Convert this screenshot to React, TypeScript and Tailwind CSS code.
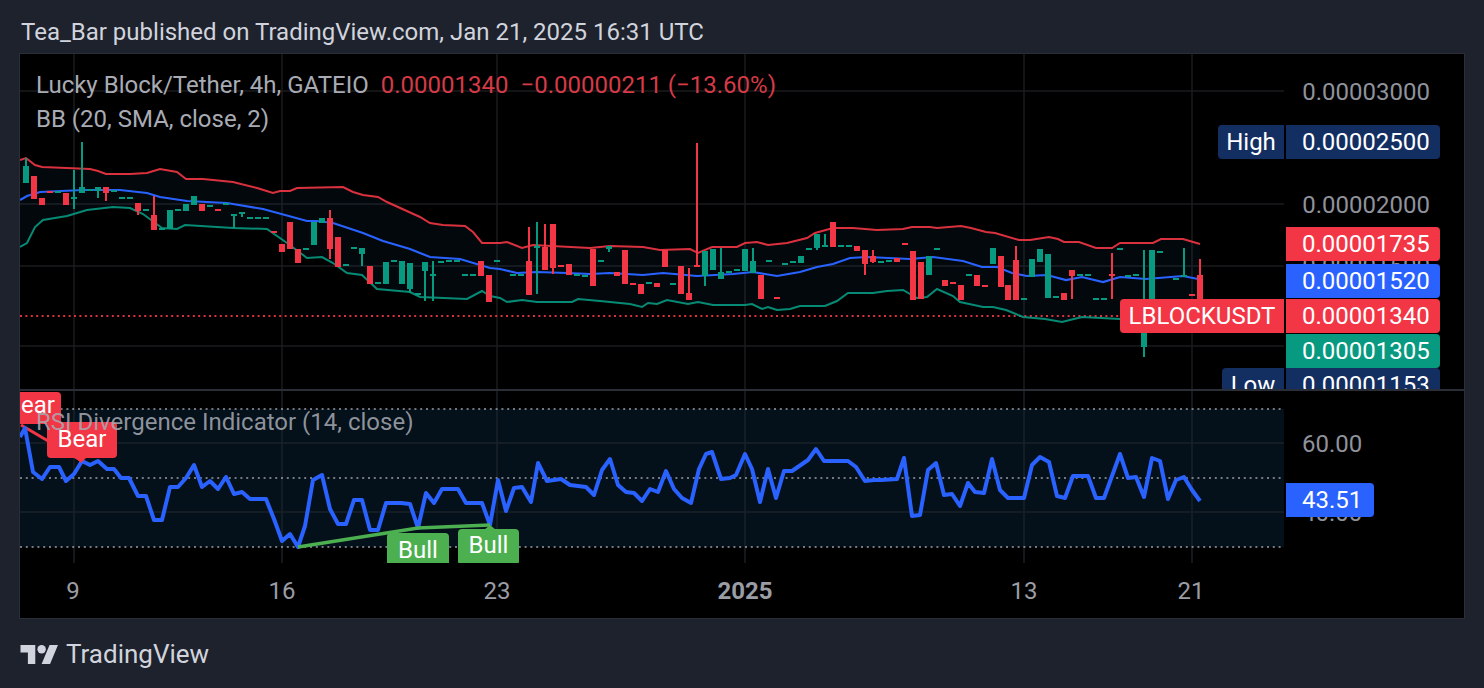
const RED = "#f23645";
const TEAL = "#089981";
const BLUE = "#2962ff";

const upper =
  "20,160 26,158 35,165 42,167 67,168 90,169 98,171 106,174 130,174 147,173 160,169 177,172 186,179 203,179 233,182 257,188 273,193 280,191 290,191 297,188 343,187 353,192 363,195 378,197 387,202 420,217 430,223 443,225 465,226 473,232 482,243 500,243 507,242 522,248 533,245 590,248 610,246 643,247 660,250 690,249 698,253 712,247 737,247 745,243 757,242 768,245 787,243 807,238 815,233 833,228 853,228 877,230 903,229 912,227 930,227 937,228 961,226 971,228 986,232 995,233 1019,240 1030,240 1049,237 1058,239 1064,242 1079,242 1096,248 1112,248 1120,243 1153,243 1161,239 1183,239 1200,244";
const middle =
  "20,200 27,196 40,192 83,190 120,190 147,193 160,197 187,201 227,203 263,209 307,221 317,221 333,223 363,233 383,241 410,249 430,257 460,259 490,268 500,269 517,273 537,272 567,273 590,274 610,273 643,275 663,273 697,276 733,274 753,272 777,276 800,272 817,267 833,264 850,258 867,257 910,259 933,257 963,261 982,267 997,267 1012,273 1027,276 1047,275 1066,280 1082,277 1103,282 1120,277 1146,279 1183,276 1198,279";
const lower =
  "20,247 27,243 35,227 43,220 67,216 87,210 113,207 130,208 143,214 162,228 177,229 185,225 233,228 267,229 287,243 307,258 322,257 333,263 347,273 362,275 377,289 410,292 420,297 467,299 482,291 490,296 500,298 507,302 522,300 537,302 572,302 578,299 600,301 630,304 642,307 648,303 657,304 667,300 688,304 698,302 713,305 745,305 752,304 762,309 768,307 777,310 790,309 800,306 825,306 837,301 848,293 873,293 887,291 903,290 917,298 927,297 937,289 953,296 960,302 983,307 993,307 1006,310 1023,317 1045,319 1062,322 1082,317 1120,319 1200,316";
const bandFill = `${upper} ${lower.split(" ").reverse().join(" ")}`;

const rsi =
  "20,436 25,427 33,471 42,478 50,466 59,466 66,480 74,473 82,460 90,464 98,460 107,468 114,468 121,477 129,477 138,495 146,495 154,519 162,519 170,486 178,486 186,477 194,464 202,486 210,480 218,488 226,476 234,493 242,491 250,498 266,498 274,518 282,540 290,533 298,546 305,525 313,479 322,474 330,508 338,523 346,523 354,499 362,499 370,529 378,529 386,502 401,502 410,503 418,527 426,492 434,502 442,488 458,488 466,502 482,502 490,524 498,479 506,510 514,487 522,486 531,501 538,462 547,480 561,478 570,484 586,486 594,494 602,469 610,458 618,484 626,491 634,492 642,500 650,488 658,491 666,470 674,488 682,497 691,502 699,468 706,453 712,451 721,478 730,477 736,474 745,453 752,468 760,501 768,468 776,497 784,470 792,470 808,459 816,448 824,460 848,460 856,466 865,480 874,479 881,479 897,478 904,457 912,515 920,514 928,469 936,462 944,494 952,493 960,505 968,482 975,491 984,492 992,458 1000,489 1008,497 1024,497 1032,464 1040,456 1049,461 1057,495 1065,497 1073,475 1088,475 1096,497 1104,497 1120,453 1128,477 1136,476 1144,496 1152,457 1160,460 1168,498 1176,479 1184,476 1192,489 1200,500";

// x, body top, body bottom, colour, wick top, wick bottom
type Candle = [number, number, number, "r" | "g", number?, number?];

const candles: Candle[] = [
  [26, 166, 183, "g", 158], [34, 176, 199, "r"], [42, 198, 205, "r"], [50, 191, 193, "r"], [58, 191, 193, "g"],
  [66, 193, 205, "r"], [74, 197, 199, "g", 170, 209], [82, 187, 193, "g", 142], [90, 189, 191, "g"],
  [98, 187, 191, "g", undefined, 198], [106, 187, 193, "r", undefined, 201], [114, 190, 192, "g"],
  [122, 197, 199, "g"], [130, 197, 199, "g"], [138, 203, 211, "r", undefined, 215], [146, 209, 211, "g"],
  [154, 215, 230, "r", 196], [162, 228, 230, "g"], [170, 210, 229, "g"], [178, 209, 211, "g"], [186, 204, 211, "g"],
  [194, 196, 205, "g"], [202, 204, 211, "r"], [210, 205, 207, "g"], [218, 209, 211, "r"], [226, 203, 205, "g"],
  [234, 214, 216, "g", undefined, 228], [242, 212, 214, "g", undefined, 217], [250, 217, 219, "g"],
  [258, 217, 219, "g"], [266, 217, 219, "g"], [274, 231, 233, "r"], [282, 244, 252, "r"], [290, 222, 249, "r"],
  [298, 249, 263, "r"], [306, 248, 250, "g"], [314, 222, 245, "g"], [322, 218, 223, "g"],
  [330, 218, 249, "r", 210, 259], [338, 237, 267, "r"], [346, 264, 266, "g"], [354, 247, 249, "g"],
  [362, 248, 254, "g", undefined, 266], [370, 266, 284, "r"], [378, 282, 284, "g"], [386, 262, 284, "g"],
  [394, 260, 262, "g"], [402, 261, 284, "g"], [410, 263, 289, "g", undefined, 293], [418, 293, 295, "g"],
  [425, 262, 271, "g", undefined, 301], [433, 274, 276, "g", 261, 301], [441, 261, 263, "g"], [449, 260, 262, "g"],
  [457, 260, 262, "g"], [465, 274, 276, "g"], [473, 274, 276, "g"], [481, 261, 276, "r"], [489, 275, 302, "r"],
  [497, 260, 262, "g"], [513, 274, 276, "g"], [521, 274, 276, "g"], [529, 261, 295, "r", 227],
  [537, 246, 248, "g", 222, 294], [545, 247, 270, "r", 224], [553, 224, 268, "r", undefined, 274],
  [561, 265, 267, "r"], [569, 264, 275, "r"], [577, 274, 276, "g"], [585, 275, 277, "g"], [593, 249, 286, "r"],
  [601, 260, 262, "g"], [609, 246, 249, "g", undefined, 252], [617, 272, 276, "r"], [625, 250, 284, "r"],
  [633, 283, 285, "r"], [641, 284, 294, "r"], [649, 282, 284, "g"], [657, 283, 287, "r"], [665, 250, 267, "r"],
  [673, 283, 285, "g"], [681, 266, 294, "r"], [689, 293, 300, "r", 268], [697, 265, 267, "r", 143],
  [705, 251, 276, "g", undefined, 286], [713, 249, 270, "g"], [721, 272, 279, "g", 248], [729, 271, 273, "g"],
  [737, 269, 271, "g"], [745, 249, 271, "g"], [753, 261, 273, "g", 248], [761, 275, 299, "r"], [769, 260, 262, "g"],
  [777, 297, 299, "r"], [785, 263, 265, "g"], [793, 261, 263, "g"], [801, 256, 263, "g"], [809, 248, 250, "g"],
  [817, 234, 248, "g", undefined, 250], [825, 245, 247, "g", 234], [833, 222, 247, "r"], [841, 245, 247, "g"],
  [849, 245, 247, "g"], [857, 246, 251, "r"], [865, 250, 264, "r", undefined, 275], [873, 256, 262, "r", 250, 263],
  [881, 261, 263, "g"], [889, 260, 262, "g"], [897, 258, 262, "r"], [905, 243, 245, "r"], [913, 251, 300, "r"],
  [921, 262, 299, "r"], [929, 256, 275, "g"], [937, 248, 250, "g"], [945, 280, 286, "r"], [953, 282, 284, "r"],
  [961, 285, 300, "r"], [969, 274, 276, "g"], [977, 275, 286, "r"], [985, 285, 287, "r"], [993, 248, 264, "g"],
  [1001, 256, 287, "r"], [1008, 285, 300, "r"], [1016, 260, 300, "r", 246], [1024, 298, 300, "g"],
  [1032, 259, 277, "g"], [1040, 249, 262, "g"], [1048, 254, 298, "g"], [1056, 296, 298, "g"], [1064, 293, 300, "r"],
  [1072, 270, 276, "r", undefined, 299], [1080, 274, 276, "g"], [1088, 274, 276, "g"], [1096, 298, 300, "g"],
  [1104, 298, 300, "g"], [1112, 274, 276, "r", 253, 299], [1120, 248, 250, "g"], [1128, 275, 277, "g"],
  [1136, 274, 276, "g"], [1144, 333, 347, "g", 250, 357], [1152, 250, 300, "g"], [1160, 251, 253, "g"],
  [1176, 278, 280, "g"], [1184, 275, 277, "g", 248], [1192, 294, 296, "r"], [1200, 275, 300, "r", 259],
];

function PriceTag({ top, bg, label, value, labelWidth }: { top: string; bg: string; label?: string; value: string; labelWidth?: string }) {
  return (
    <div className={`absolute right-[24px] flex h-[34px] gap-[2px] text-white ${top}`}>
      {label && (
        <div className={`flex items-center justify-center rounded-l-[4px] ${bg} ${labelWidth}`}>{label}</div>
      )}
      <div className={`flex w-[154px] items-center rounded-r-[4px] pl-[16px] ${bg}`}>{value}</div>
    </div>
  );
}

function MainPane() {
  return (
    <div className="relative h-[335px] overflow-hidden">
      <svg className="absolute top-0 left-0" width="1264" height="335" viewBox="20 54 1264 335">
        <g stroke="#1a1b1e" strokeWidth="1.5">
          {[91, 204, 266, 346].map((y) => <line key={y} x1="20" x2="1284" y1={y} y2={y} />)}
          {[74, 282, 497, 745, 1024, 1192].map((x) => <line key={x} x1={x} x2={x} y1="54" y2="389" />)}
        </g>
        <polygon points={bandFill} fill="#2196f3" fillOpacity="0.05" />
        <line x1="20" x2="1130" y1="316" y2="316" stroke={RED} strokeOpacity="0.9" strokeWidth="2" strokeDasharray="2 3.4" />
        <polyline points={upper} fill="none" stroke={RED} strokeOpacity="0.9" strokeWidth="2" />
        <polyline points={lower} fill="none" stroke={TEAL} strokeOpacity="0.9" strokeWidth="2" />
        <polyline points={middle} fill="none" stroke={BLUE} strokeWidth="2.2" />
        {candles.map(([x, top, bot, c, wickTop, wickBot]) => {
          const color = c === "r" ? RED : TEAL;
          return (
            <g key={x} fill={color}>
              {(wickTop !== undefined || wickBot !== undefined) && (
                <rect x={x - 1} y={wickTop ?? top} width="2" height={(wickBot ?? bot) - (wickTop ?? top)} />
              )}
              <rect x={x - 3} y={top} width="6" height={bot - top} />
            </g>
          );
        })}
      </svg>

      <div className="absolute top-[19px] left-[16px] flex flex-col gap-[10px] leading-[24px] whitespace-nowrap text-[#a8abb4]">
        <div className="flex gap-[12px]">
          <span>Lucky Block/Tether, 4h, GATEIO</span>
          <span className="text-[#d63a47]">0.00001340</span>
          <span className="text-[#d63a47]">−0.00000211 (−13.60%)</span>
        </div>
        <div>BB (20, SMA, close, 2)</div>
      </div>

      <div className="absolute right-[34px] top-[26px] leading-[24px] text-[#8f929b]">0.00003000</div>
      <div className="absolute right-[34px] top-[139px] leading-[24px] text-[#8f929b]">0.00002000</div>
      <div className="absolute right-[34px] top-[200px] leading-[24px] text-[#8f929b]">0.00001500</div>

      <PriceTag top="top-[71px]" bg="bg-[#132e60]" label="High" labelWidth="w-[66px]" value="0.00002500" />
      <PriceTag top="top-[173px]" bg="bg-[#f23645]" value="0.00001735" />
      <PriceTag top="top-[210px]" bg="bg-[#2962ff]" value="0.00001520" />
      <PriceTag top="top-[245px]" bg="bg-[#f23645]" label="LBLOCKUSDT" labelWidth="w-[164px]" value="0.00001340" />
      <PriceTag top="top-[280px]" bg="bg-[#089981]" value="0.00001305" />
      <PriceTag top="top-[314px]" bg="bg-[#132e60]" label="Low" labelWidth="w-[62px]" value="0.00001153" />
    </div>
  );
}

function RsiPane() {
  return (
    <div className="relative h-[172px] overflow-hidden">
      <svg className="absolute top-0 left-0" width="1264" height="172" viewBox="20 390 1264 172">
        <rect x="20" y="408" width="1264" height="138" fill="#04101a" />
        <g stroke="#1a2129" strokeWidth="1.5">
          {[442, 511].map((y) => <line key={y} x1="20" x2="1284" y1={y} y2={y} />)}
          {[74, 282, 497, 745, 1024, 1192].map((x) => <line key={x} x1={x} x2={x} y1="390" y2="562" />)}
        </g>
        <g stroke="#9a9da5" strokeWidth="1.5" strokeDasharray="2 3.8">
          {[408, 477, 546].map((y) => <line key={y} x1="20" x2="1284" y1={y} y2={y} />)}
        </g>
        <line x1="21" y1="424" x2="82" y2="460" stroke={RED} strokeWidth="3" />
        <polyline points={rsi} fill="none" stroke={BLUE} strokeWidth="4" strokeLinejoin="round" />
        <polyline points="298,546 418,527 490,524" fill="none" stroke="#4caf50" strokeWidth="3.5" />
        <polygon points="75,456 87,456 81,462" fill={RED} />
        <polygon points="484,529 496,529 490,524" fill="#4caf50" />
      </svg>

      <div className="absolute top-[1px] left-[-20px] flex h-[32px] w-[61px] items-center justify-center rounded-[4px] bg-[#f23645] pb-[7px] text-white">Bear</div>
      <div className="absolute top-[31px] left-[27px] flex h-[36px] w-[70px] items-center justify-center rounded-[4px] bg-[#f23645] pb-[2px] text-white">Bear</div>
      <div className="absolute top-[142px] left-[367px] flex h-[36px] w-[62px] items-center justify-center rounded-[4px] bg-[#4caf50] pb-[2px] text-white">Bull</div>
      <div className="absolute top-[138px] left-[438px] flex h-[36px] w-[61px] items-center justify-center rounded-[4px] bg-[#4caf50] pb-[4px] text-white">Bull</div>
      <div className="absolute top-[19px] left-[16px] leading-[24px] whitespace-nowrap text-[#a8abb4]/85">RSI Divergence Indicator (14, close)</div>

      <div className="absolute left-[1282px] top-[41px] leading-[24px] text-[#8f929b]">60.00</div>
      <div className="absolute left-[1282px] top-[110px] leading-[24px] text-[#8f929b]">40.00</div>
      <div className="absolute top-[92px] left-[1266px] flex h-[34px] w-[88px] items-center rounded-r-[4px] bg-[#2962ff] pl-[16px] text-white">43.51</div>
    </div>
  );
}

function TimeAxis() {
  const ticks = [
    { x: "left-[53px]", text: "9" },
    { x: "left-[262px]", text: "16" },
    { x: "left-[477px]", text: "23" },
    { x: "left-[725px]", text: "2025", bold: true },
    { x: "left-[1004px]", text: "13" },
    { x: "left-[1171px]", text: "21" },
  ];
  return (
    <div className="relative h-[55px]">
      {ticks.map((t) => (
        <span key={t.text} className={`absolute top-[16px] flex w-0 justify-center leading-[24px] text-[#9a9da5] ${t.x} ${t.bold ? "font-bold" : ""}`}>
          {t.text}
        </span>
      ))}
    </div>
  );
}

export default function App() {
  return (
    <div className="flex h-[688px] w-[1484px] flex-col overflow-hidden bg-[#1e222d] font-['Roboto',sans-serif] text-[24px]">
      <div className="flex h-[53px] items-center pt-[10px] pl-[21px] text-[#d1d4dc]">
        Tea_Bar published on TradingView.com, Jan 21, 2025 16:31 UTC
      </div>
      <div className="mx-[19px] flex h-[566px] flex-col border border-[#2a2e39] bg-black">
        <MainPane />
        <div className="h-[2px] shrink-0 bg-[#2a2e39]" />
        <RsiPane />
        <TimeAxis />
      </div>
      <div className="flex flex-1 items-center gap-[7px] pt-[1px] pl-[20px] text-[#d1d4dc]">
        <svg width="39" height="19" viewBox="0 4 36 18" fill="#d1d4dc">
          <path d="M14 22H7V11H0V4h14v18zM28 22h-8l7.5-18h8L28 22z" />
          <circle cx="20" cy="8" r="4" />
        </svg>
        <span className="text-[26px]">TradingView</span>
      </div>
    </div>
  );
}
